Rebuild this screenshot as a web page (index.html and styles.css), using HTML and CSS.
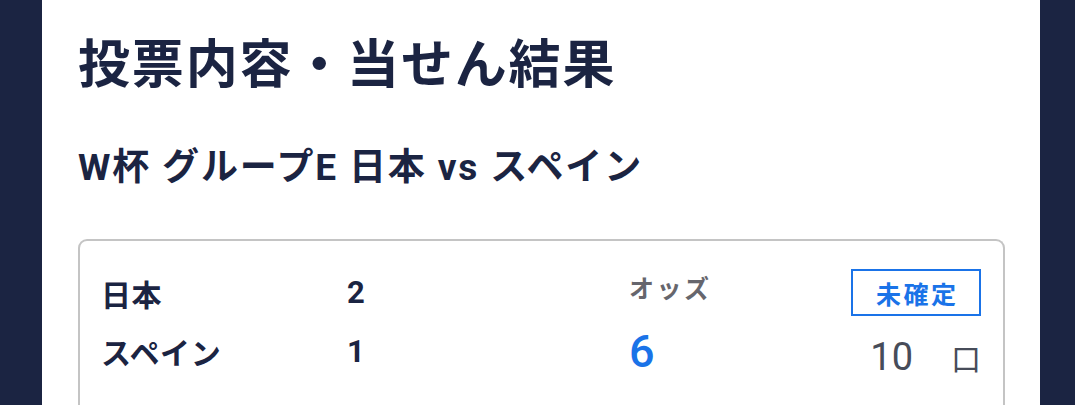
FILE: index.html
```html
<!DOCTYPE html>
<html lang="ja">
<head>
<meta charset="utf-8">
<title>投票内容・当せん結果</title>
<link rel="stylesheet" href="styles.css">
</head>
<body>
<main class="panel">
  <h1 class="title">投票内容・当せん結果</h1>
  <h2 class="match">W杯 グループE 日本 vs スペイン</h2>
  <section class="card">
    <div class="team">日本</div>
    <div class="score">2</div>
    <div class="odds-label">オッズ</div>
    <div class="status"><span class="badge">未確定</span></div>
    <div class="team">スペイン</div>
    <div class="score">1</div>
    <div class="odds">6</div>
    <div class="units"><span class="units-num">10</span><span class="units-label">口</span></div>
  </section>
</main>
</body>
</html>
```
FILE: styles.css
```css
html, body {
  margin: 0;
  padding: 0;
}
body {
  background: #1b2442;
  font-family: Roboto, "Noto Sans CJK JP", sans-serif;
  color: #1b2442;
  height: 405px;
  overflow: hidden;
}
.panel {
  margin-left: 42px;
  width: 998px;
  height: 405px;
  background: #ffffff;
  padding: 0 35px 0 36px;
  box-sizing: border-box;
  overflow: hidden;
}
.title {
  margin: 0;
  padding-top: 28px;
  font-size: 52px;
  line-height: 76px;
  font-weight: 700;
  letter-spacing: 0.035em;
}
.match {
  margin: 42px 0 0;
  font-size: 37px;
  line-height: 44px;
  font-weight: 700;
  letter-spacing: 0.05em;
}
.card {
  margin-top: 49px;
  border: 2px solid #c4c4c4;
  border-bottom: 0;
  border-radius: 9px 9px 0 0;
  height: 166px;
  box-sizing: border-box;
  padding: 28px 22px 0 21px;
  display: grid;
  grid-template-columns: 246px 282px 1fr auto;
  grid-template-rows: 47px 70px;
  align-items: center;
}
.team {
  font-size: 30px;
  font-weight: 700;
  letter-spacing: 0.02em;
}
.score {
  font-size: 31px;
  font-weight: 700;
}
.odds-label {
  font-size: 25px;
  font-weight: 700;
  color: #66666d;
  letter-spacing: 0.1em;
  align-self: start;
}
.odds {
  font-size: 45px;
  font-weight: 500;
  color: #1a73e8;
}
.status {
  justify-self: end;
}
.badge {
  display: inline-flex;
  align-items: center;
  justify-content: center;
  width: 130px;
  height: 47px;
  box-sizing: border-box;
  border: 2px solid #1a73e8;
  color: #1a73e8;
  font-size: 25px;
  font-weight: 700;
  letter-spacing: 0.1em;
  padding-left: 0.1em;
}
.units {
  justify-self: end;
  display: flex;
  align-items: baseline;
  color: #474c59;
  padding-top: 12px;
}
.units-num {
  font-size: 38px;
  font-weight: 400;
}
.units-label {
  margin-left: 38px;
  font-size: 30px;
  font-weight: 400;
}
```
